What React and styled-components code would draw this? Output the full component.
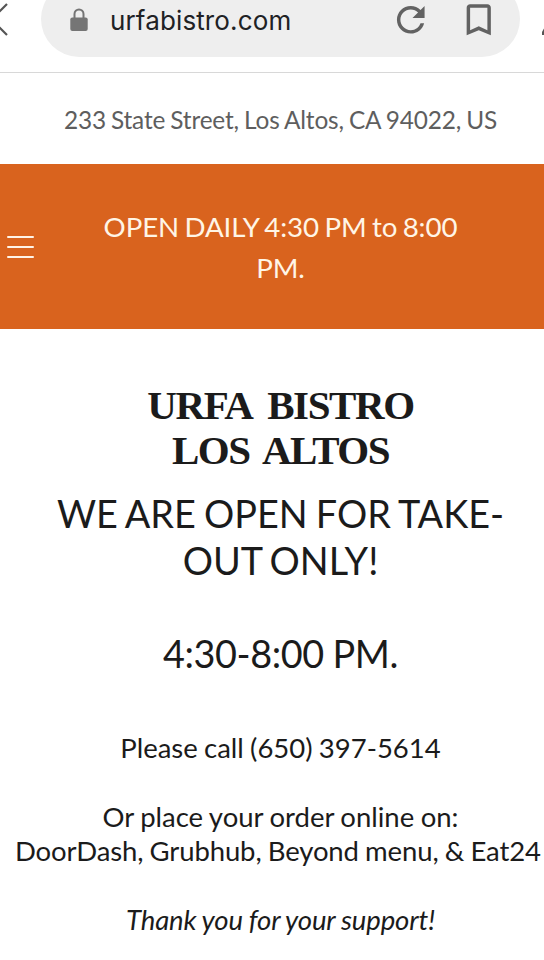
import React from "react";
import styled, { createGlobalStyle } from "styled-components";
import { MdRefresh, MdBookmarkBorder } from "react-icons/md";

const GlobalStyle = createGlobalStyle`
  * {
    box-sizing: border-box;
  }

  body {
    margin: 0;
    background: #fff;
    overflow: hidden;
  }
`;

const Page = styled.div`
  height: 960px;
  overflow: hidden;
  background: #fff;
  color: #1b1b1b;
  font-family: Lato, sans-serif;
`;

const BrowserBar = styled.header`
  display: flex;
  align-items: flex-start;
  justify-content: space-between;
  height: 73px;
  border-bottom: 1px solid #d8d8d8;
  overflow: hidden;
`;

const EdgeIcon = styled.svg`
  flex: none;
  width: ${({ $width }) => $width}px;
  height: 57px;
`;

const AddressPill = styled.div`
  display: flex;
  align-items: center;
  width: 479px;
  height: 76px;
  margin-top: -19px;
  padding: 2px 21px 0 29px;
  border-radius: 38px;
  background: #eee;
  color: #626262;

  svg {
    flex: none;
  }
`;

const Url = styled.span`
  flex: 1;
  margin-left: 22px;
  padding-top: 1px;
  color: #202124;
  font-family: Inter, sans-serif;
  font-size: 26px;
  line-height: 32px;
  letter-spacing: 0.13px;
`;

const BarActions = styled.div`
  display: flex;
  gap: 26px;
`;

const StreetAddress = styled.address`
  height: 91px;
  padding: 30px 0 0 17px;
  color: #5e5e5e;
  font-size: 24.4px;
  font-style: normal;
  line-height: 34px;
  text-align: center;
`;

const Banner = styled.section`
  display: flex;
  align-items: center;
  height: 165px;
  padding-left: 7px;
  background: #d9631e;
  color: #fff5e6;
`;

const MenuButton = styled.button`
  display: flex;
  flex-direction: column;
  gap: 8px;
  flex: none;
  width: 27px;
  padding: 1px 0 0;
  border: 0;
  background: none;
`;

const MenuBar = styled.span`
  height: 2px;
  border-radius: 1px;
  background: #fff3e6;
`;

const Hours = styled.p`
  flex: 1;
  margin: 0 17px 0 0;
  padding-top: 1px;
  font-size: 27.7px;
  line-height: 41.5px;
  text-align: center;
`;

const Content = styled.main`
  padding: 54px 0 0 17px;
  text-align: center;
  white-space: nowrap;
`;

const Title = styled.h1`
  margin: 0 0 18px;
  font-family: "Liberation Serif", serif;
  font-size: 41px;
  font-weight: 700;
  line-height: 45px;
`;

const Notice = styled.p`
  margin: 0 0 53.5px;
  font-size: 37.8px;
  line-height: 46.5px;
`;

const Details = styled.p`
  margin: 0;
  font-size: 27.5px;
  line-height: 34.5px;
`;

const Line = styled.span`
  display: block;
  letter-spacing: ${({ $tracking = 0 }) => $tracking}px;
  word-spacing: ${({ $words = 0 }) => $words}px;
`;

const WideLine = styled(Line)`
  margin: 0 5px 0 -2px;
`;

const LockIcon = () => (
  <svg width="18" height="24" viewBox="0 0 18 24">
    <path d="M4.5 11V6a4.5 4.5 0 0 1 9 0V11" fill="none" stroke="#757575" strokeWidth="2" />
    <rect x="0.3" y="9.5" width="17.4" height="13.5" rx="2" fill="#757575" />
  </svg>
);

const App = () => {
  return (
    <Page>
      <GlobalStyle />
      <BrowserBar>
        <EdgeIcon $width={41} viewBox="0 0 41 57">
          <path d="M7 4L-8.5 19.5L7 35" fill="none" stroke="#555" strokeWidth="2.2" />
        </EdgeIcon>
        <AddressPill>
          <LockIcon />
          <Url>urfabistro.com</Url>
          <BarActions>
            <MdRefresh size={41.5} />
            <MdBookmarkBorder size={41.5} />
          </BarActions>
        </AddressPill>
        <EdgeIcon $width={24} viewBox="0 0 24 57">
          <path d="M24 28.5L22 32V35H24Z" fill="#555" />
        </EdgeIcon>
      </BrowserBar>

      <StreetAddress>
        <Line $tracking={-0.15} $words={-1}>233 State Street, Los Altos, CA 94022, US</Line>
      </StreetAddress>

      <Banner>
        <MenuButton aria-label="Menu">
          <MenuBar />
          <MenuBar />
          <MenuBar />
        </MenuButton>
        <Hours>
          <Line $tracking={-0.07} $words={-1.7}>OPEN DAILY 4:30 PM to 8:00</Line>
          <Line $tracking={-0.2}>PM.</Line>
        </Hours>
      </Banner>

      <Content>
        <Title>
          <Line $tracking={-1.4} $words={8}>URFA BISTRO</Line>
          <Line $tracking={-1.5} $words={6}>LOS ALTOS</Line>
        </Title>
        <Notice>
          <Line $words={-1.5}>WE ARE OPEN FOR TAKE-</Line>
          <Line $words={-2}>OUT ONLY!</Line>
          <br />
          <Line $tracking={-0.4} $words={-0.5}>4:30-8:00 PM.</Line>
        </Notice>
        <Details>
          <Line $words={-0.8}>Please call (650) 397-5614</Line>
          <br />
          <Line $words={-0.6}>Or place your order online on:</Line>
          <WideLine $tracking={-0.12} $words={-0.7}>
            DoorDash, Grubhub, Beyond menu, &amp; Eat24
          </WideLine>
          <br />
          <Line as="em" $tracking={-0.12} $words={-0.5}>Thank you for your support!</Line>
        </Details>
      </Content>
    </Page>
  );
};

export default App;
